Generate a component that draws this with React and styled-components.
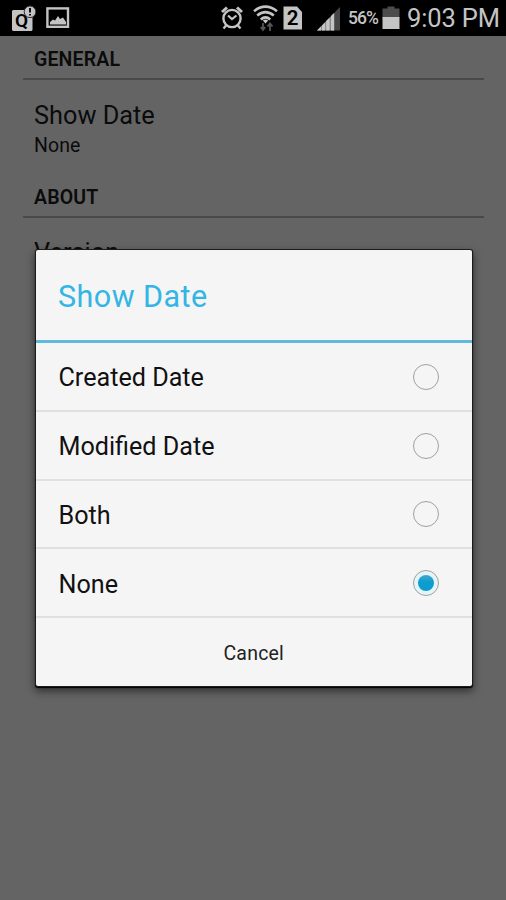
import React, { useState } from 'react';
import styled, { createGlobalStyle } from 'styled-components';

const palette = {
  status: '#c4c4c4',
  page: '#646464',
  ink: '#0b0b0b',
  rule: '#494949',
  panel: '#f5f5f5',
  divider: '#e0e0e0',
  accent: '#33b5e5',
};

const GlobalStyle = createGlobalStyle`
  body {
    margin: 0;
    background: ${palette.page};
    font-family: Roboto, sans-serif;
  }
`;

const Screen = styled.div`
  position: relative;
  width: 506px;
  height: 900px;
  overflow: hidden;
  background: ${palette.page};
`;

const StatusBar = styled.header`
  display: flex;
  align-items: center;
  height: 36px;
  box-sizing: border-box;
  padding: 0 7px 0 10px;
  background: #000;
  color: ${palette.status};
  svg {
    display: block;
    flex: none;
  }
`;

const StatusGroup = styled.div`
  display: flex;
  align-items: center;
  gap: ${({ $gap = 0 }) => $gap}px;
`;

const StatusRight = styled(StatusGroup)`
  margin-left: auto;
`;

const SignalSlot = styled.span`
  margin-left: 14px;
  padding-top: 2px;
`;

const BatterySlot = styled.span`
  margin-left: 4px;
`;

const BatteryLevel = styled.span`
  width: 30px;
  margin-left: 7px;
  font-size: 17.5px;
  font-weight: 500;
  letter-spacing: -0.9px;
  line-height: 38px;
  white-space: nowrap;
`;

const Clock = styled.span`
  width: 92px;
  margin-left: 7px;
  font-size: 25.5px;
  line-height: 36px;
  letter-spacing: -0.15px;
  white-space: nowrap;
`;

const Settings = styled.main`
  padding: 0 22px 0 23px;
  color: ${palette.ink};
`;

const SectionTitle = styled.h2`
  height: ${({ $height }) => $height}px;
  box-sizing: border-box;
  margin: 0;
  padding: ${({ $top }) => $top}px 0 0 11px;
  border-bottom: 2px solid ${palette.rule};
  font-size: 19.5px;
  font-weight: 600;
  line-height: 24px;
  letter-spacing: 0.15px;
`;

const Preference = styled.div`
  padding: ${({ $top }) => $top}px 0 0 11px;
`;

const PreferenceName = styled.div`
  font-size: 25.3px;
  line-height: 32px;
`;

const PreferenceValue = styled.div`
  height: 27px;
  font-size: 19.5px;
  line-height: 28px;
  letter-spacing: 0.1px;
`;

const Overlay = styled.div`
  position: absolute;
  top: 250px;
  left: 36px;
`;

const Dialog = styled.section`
  width: 435.5px;
  height: 436px;
  border-radius: 2px;
  background: ${palette.panel};
  box-shadow: 0 0 0 1px #1c1c1c, 0 1px 1px 1px #000, 0 4px 9px 1px rgba(0, 0, 0, 0.55);
`;

const DialogTitle = styled.h1`
  height: 93px;
  box-sizing: border-box;
  margin: 0;
  padding-left: 22px;
  border-bottom: 3px solid #62b9dd;
  color: ${palette.accent};
  font-size: 30.5px;
  font-weight: 400;
  line-height: 93px;
  letter-spacing: 0.45px;
`;

const Option = styled.button`
  display: flex;
  align-items: center;
  justify-content: space-between;
  width: 100%;
  height: 68.8px;
  box-sizing: border-box;
  padding: 1px 32.5px 0 22.5px;
  border: 0;
  border-bottom: 2px solid ${palette.divider};
  background: none;
  color: #111;
  font: inherit;
  font-size: 25.15px;
  line-height: 30px;
`;

const OptionLabel = styled.span`
  padding-top: 3px;
`;

const Radio = styled.span`
  display: flex;
  align-items: center;
  justify-content: center;
  width: 26px;
  height: 26px;
  box-sizing: border-box;
  border: 1.5px solid #a0a0a0;
  border-radius: 50%;
  background: ${({ $checked }) => ($checked ? '#e4f5fa' : 'transparent')};
`;

const Dot = styled.span`
  width: 16px;
  height: 16px;
  border-radius: 50%;
  background: linear-gradient(#45a8cc, #0c9ccf 45%);
`;

const CancelButton = styled.button`
  display: block;
  width: 100%;
  height: 68px;
  padding: 2px 0 0;
  border: 0;
  background: none;
  color: #222;
  font: inherit;
  font-size: 19.5px;
  letter-spacing: 0.2px;
`;

const NoticeIcon = () => (
  <svg width="26" height="27" viewBox="0 0 26 27">
    <path d="M2 6L3 5H19V8H22.5V25L21.5 26H3L2 25Z" fill={palette.status} />
    <text x="11.5" y="22" textAnchor="middle" fontSize="19" fontWeight="600" fill="#000">
      Q
    </text>
    <circle cx="20" cy="6.8" r="5.8" fill={palette.status} stroke="#333" />
    <path d="M20 3V7.5M20 9V10.5" stroke="#111" strokeWidth="2" />
  </svg>
);

const PictureIcon = () => (
  <svg width="24" height="22" viewBox="0 0 24 22">
    <rect x="1.4" y="1.4" width="20.6" height="18.4" fill="none" stroke={palette.status} strokeWidth="2.4" />
    <path d="M4 17.5V15L7 12.5L9 13.5L12 9L14 12L17 10.5L20 15V17.5Z" fill={palette.status} />
  </svg>
);

const AlarmIcon = () => (
  <svg width="22" height="24" viewBox="0 0 22 24" fill="none" stroke={palette.status}>
    <circle cx="11" cy="12.5" r="8.6" strokeWidth="2.4" />
    <path d="M7 9.5L11 13L15.5 9.5" strokeWidth="2.2" />
    <path d="M1 6L6 1.5M21 6L16 1.5" strokeWidth="3" />
    <path d="M5.5 19L2.5 22.5M16.5 19L19.5 22.5" strokeWidth="2.4" />
  </svg>
);

const WifiIcon = () => (
  <svg width="25" height="27" viewBox="0 0 25 27" fill="none" stroke={palette.status} strokeWidth="2.6">
    <path d="M1 6.2Q12.5 -2.8 24 6.2" />
    <path d="M4.2 10.5Q12.5 3.7 20.8 10.5" />
    <path d="M7.8 14.5Q12.5 10.3 17.2 14.5" />
    <path d="M9.8 15.5Q12.5 13.5 15.2 15.5L12.5 18.5Z" fill={palette.status} stroke="none" />
    <path d="M10 18V25M7.8 22L10 25L12.2 22M17 26V18.5M14.5 21.5L17 18.5L19.5 21.5" stroke="#555" strokeWidth="1.8" />
  </svg>
);

const SimIcon = () => (
  <svg width="20" height="24" viewBox="0 0 20 24">
    <path d="M0.5 0.5H14L19 6V23.5H0.5Z" fill={palette.status} />
    <text x="9.5" y="19.3" textAnchor="middle" fontSize="20.5" fontWeight="600" fill="#000">
      2
    </text>
  </svg>
);

const SignalIcon = () => (
  <svg width="24" height="24" viewBox="0 0 24 24">
    <path d="M0 23.5L17.5 5.5V23.5Z" fill="#8c8c8c" />
    <path d="M0 23.5L4 19.5V23.5ZM5 23.5V18.5L8 15.5V23.5ZM9.2 23.5V14L12.5 10.8V23.5ZM14 23.5V9L17.2 6V23.5Z" fill={palette.status} />
    <path d="M18 23.5V5L23 0V23.5Z" fill="#464646" />
  </svg>
);

const BatteryIcon = () => (
  <svg width="18" height="24" viewBox="0 0 18 24">
    <path d="M5.5 0.5H12.5V2.5H17.5V12H0.5V2.5H5.5Z" fill="#4c4c4c" />
    <rect x="0.5" y="11" width="17" height="12" fill={palette.status} />
  </svg>
);

const options = ['Created Date', 'Modified Date', 'Both', 'None'];

const App = () => {
  const [selected, setSelected] = useState('None');

  return (
    <Screen>
      <GlobalStyle />
      <StatusBar>
        <StatusGroup $gap={10}>
          <NoticeIcon />
          <PictureIcon />
        </StatusGroup>
        <StatusRight>
          <StatusGroup $gap={5}>
            <StatusGroup $gap={10}>
              <AlarmIcon />
              <WifiIcon />
            </StatusGroup>
            <SimIcon />
          </StatusGroup>
          <StatusGroup>
            <SignalSlot>
              <SignalIcon />
            </SignalSlot>
            <BatteryLevel>56%</BatteryLevel>
            <BatterySlot>
              <BatteryIcon />
            </BatterySlot>
          </StatusGroup>
          <Clock>9:03 PM</Clock>
        </StatusRight>
      </StatusBar>

      <Settings>
        <SectionTitle $height={44} $top={12}>
          GENERAL
        </SectionTitle>
        <Preference $top={20}>
          <PreferenceName>Show Date</PreferenceName>
          <PreferenceValue>None</PreferenceValue>
        </Preference>
        <SectionTitle $height={59} $top={27}>
          ABOUT
        </SectionTitle>
        <Preference $top={19}>
          <PreferenceName>Version</PreferenceName>
        </Preference>
      </Settings>

      <Overlay>
        <Dialog role="dialog">
          <DialogTitle>Show Date</DialogTitle>
          {options.map((option) => (
            <Option key={option} onClick={() => setSelected(option)}>
              <OptionLabel>{option}</OptionLabel>
              <Radio $checked={selected === option}>
                {selected === option && <Dot />}
              </Radio>
            </Option>
          ))}
          <CancelButton>Cancel</CancelButton>
        </Dialog>
      </Overlay>
    </Screen>
  );
};

export default App;
